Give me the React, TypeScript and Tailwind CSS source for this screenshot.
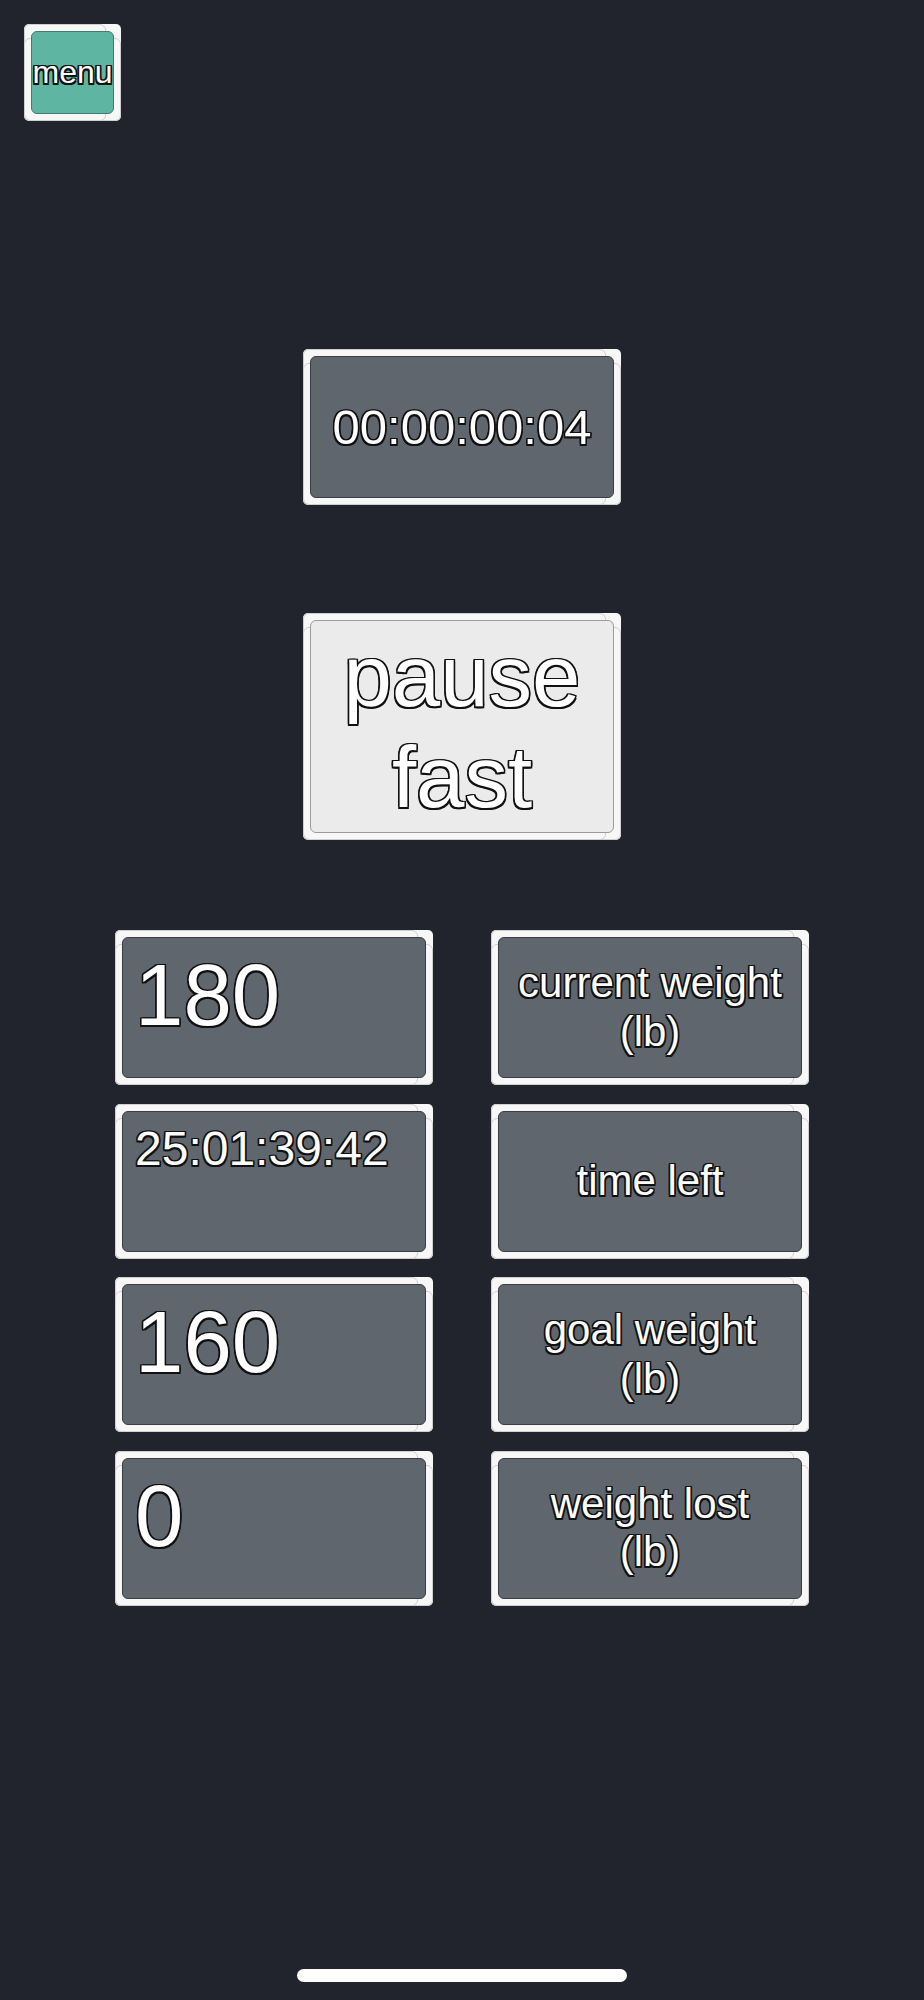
import React from "react";

const OUTLINE =
  "text-white [text-shadow:-1.5px_-1.5px_0_#111,1.5px_-1.5px_0_#111,-1.5px_1.5px_0_#111,1.5px_1.5px_0_#111,0_-1.5px_0_#111,0_1.5px_0_#111,-1.5px_0_0_#111,1.5px_0_0_#111,0_0_1px_#111]";

function Frame({
  className,
  inner,
  children,
}: {
  className: string;
  inner: string;
  children?: React.ReactNode;
}) {
  return (
    <div className={"relative p-[7px] rounded-[5px] bg-[#f7f7f7] " + className}>
      <div className="absolute left-0 right-0 top-[14px] bottom-0 rounded-[6px] border border-[#cfcfcf]" />
      <div className="absolute left-0 top-0 bottom-0 right-[15px] rounded-[6px] border border-[#cfcfcf]" />
      <div className={"relative h-full w-full rounded-[6px] border " + inner}>{children}</div>
    </div>
  );
}

const GRAY = "bg-[#5f666e] border-[#3a3e44]";

function Value({ text, size }: { text: string; size: "big" | "small" }) {
  return (
    <Frame className="w-[318px] h-[155px]" inner={GRAY}>
      {size === "big" ? (
        <div className={"pl-[12px] pt-[7px] text-[87px] leading-[1.15] " + OUTLINE}>{text}</div>
      ) : (
        <div className={"pl-[12px] pt-[9px] text-[48px] leading-[1.15] " + OUTLINE}>{text}</div>
      )}
    </Frame>
  );
}

function Label({ lines }: { lines: string[] }) {
  return (
    <Frame className="w-[318px] h-[155px]" inner={GRAY}>
      <div className="flex h-full w-full flex-col items-center justify-center">
        {lines.map((l) => (
          <div key={l} className={"text-[42px] leading-[1.15] text-center " + OUTLINE}>
            {l}
          </div>
        ))}
      </div>
    </Frame>
  );
}

export default function App() {
  return (
    <div className="relative flex min-h-[2000px] w-full flex-col bg-[#21242d] font-['Liberation_Sans',Arial,sans-serif]">
      <div className="pl-[24px] pt-[24px]">
        <Frame className="w-[97px] h-[97px]" inner="bg-[#5db5a2] border-[#3e7d6f]">
          <div className="flex h-full w-full items-center justify-center">
            <span className={"text-[32px] leading-[1.15] " + OUTLINE}>menu</span>
          </div>
        </Frame>
      </div>

      <div className="mt-[228px] flex justify-center">
        <Frame className="w-[318px] h-[156px]" inner={GRAY}>
          <div className="flex h-full w-full items-center justify-center">
            <span className={"text-[49px] leading-[1.15] " + OUTLINE}>00:00:00:04</span>
          </div>
        </Frame>
      </div>

      <div className="mt-[108px] flex justify-center">
        <Frame className="w-[318px] h-[227px]" inner="bg-[#ebebeb] border-[#9c9c9c]">
          <div className="flex h-full w-full flex-col items-center justify-center">
            <div className={"text-[87px] leading-[1.15] " + OUTLINE}>pause</div>
            <div className={"text-[87px] leading-[1.15] " + OUTLINE}>fast</div>
          </div>
        </Frame>
      </div>

      <div className="mt-[90px] grid grid-cols-[318px_318px] justify-center gap-x-[58px] gap-y-[18.5px]">
        <Value text="180" size="big" />
        <Label lines={["current weight", "(lb)"]} />
        <Value text="25:01:39:42" size="small" />
        <Label lines={["time left"]} />
        <Value text="160" size="big" />
        <Label lines={["goal weight", "(lb)"]} />
        <Value text="0" size="big" />
        <Label lines={["weight lost", "(lb)"]} />
      </div>

      <div className="mt-[363px] flex justify-center">
        <div className="h-[13px] w-[330px] rounded-full bg-white" />
      </div>
    </div>
  );
}
